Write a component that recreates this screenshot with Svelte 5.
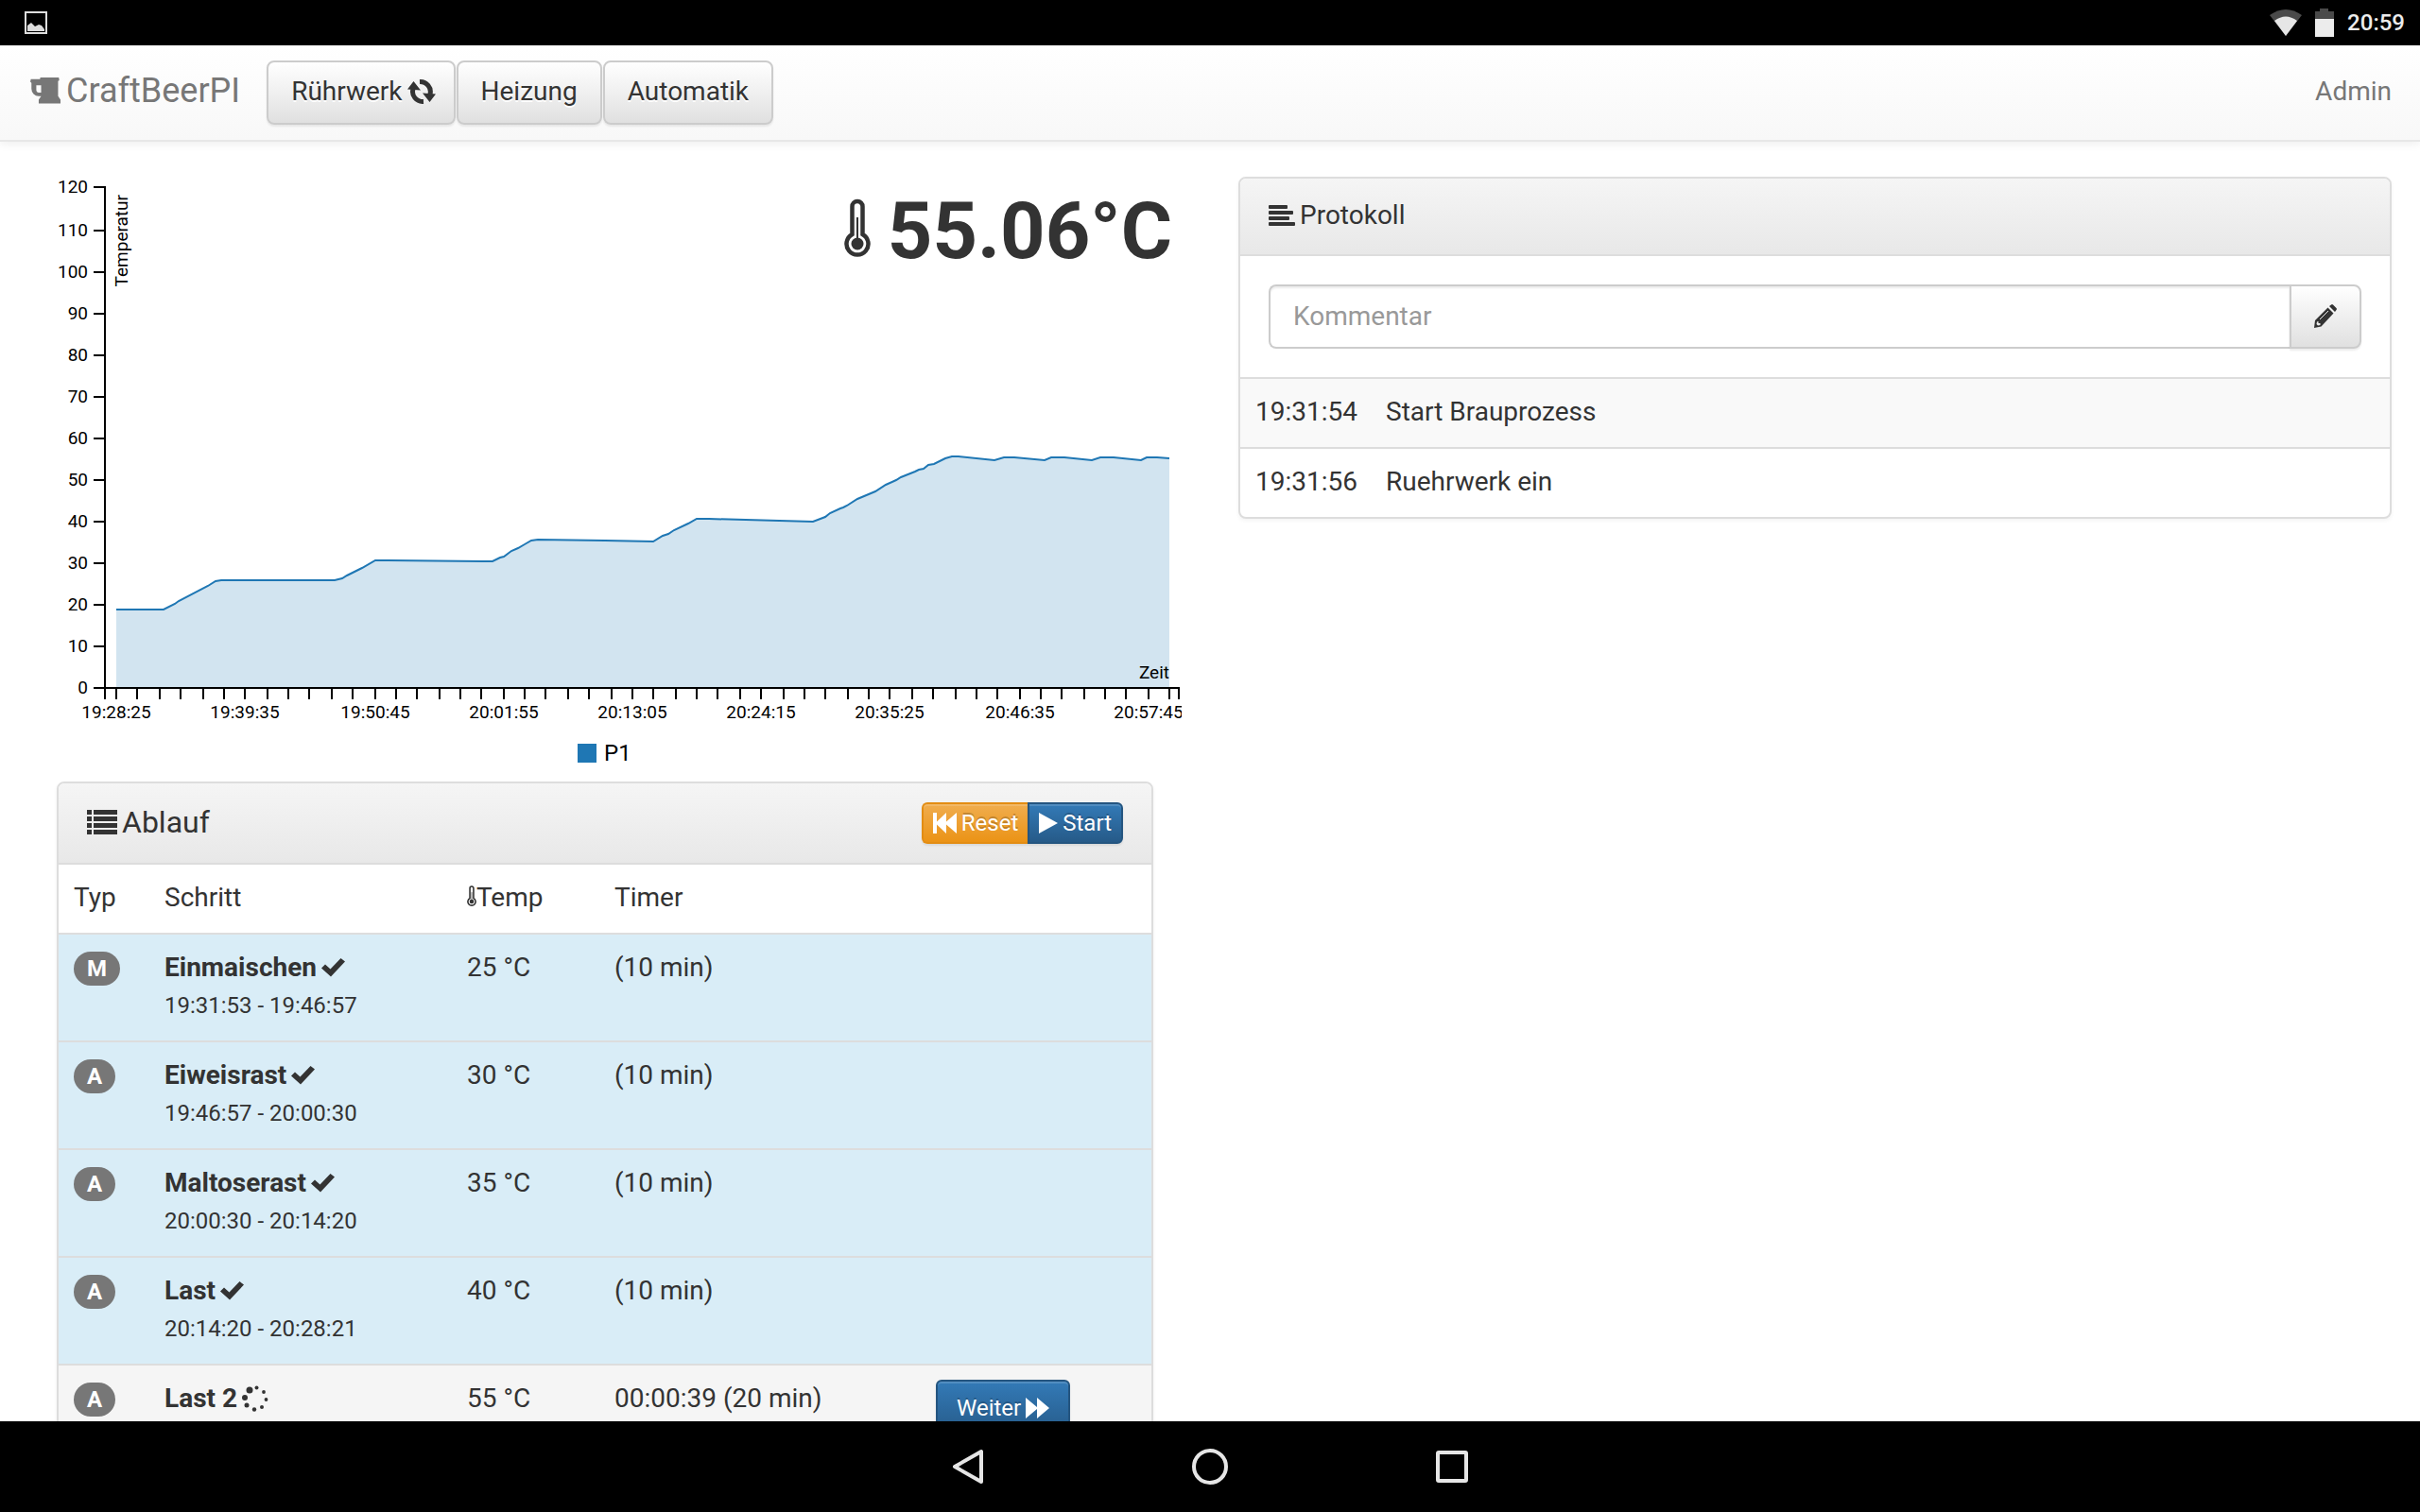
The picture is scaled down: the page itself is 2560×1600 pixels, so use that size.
<script>
    let comment = '';

    const controls = ['Rührwerk', 'Heizung', 'Automatik'];

    const steps = [
        { type: 'M', name: 'Einmaischen', from: '19:31:53', to: '19:46:57', temp: 25, timer: '(10 min)', state: 'done' },
        { type: 'A', name: 'Eiweisrast', from: '19:46:57', to: '20:00:30', temp: 30, timer: '(10 min)', state: 'done' },
        { type: 'A', name: 'Maltoserast', from: '20:00:30', to: '20:14:20', temp: 35, timer: '(10 min)', state: 'done' },
        { type: 'A', name: 'Last', from: '20:14:20', to: '20:28:21', temp: 40, timer: '(10 min)', state: 'done' },
        { type: 'A', name: 'Last 2', temp: 55, timer: '00:00:39 (20 min)', state: 'active' }
    ];

    const logs = [
        { time: '19:31:54', text: 'Start Brauprozess' },
        { time: '19:31:56', text: 'Ruehrwerk ein' }
    ];

    // chart
    const plotHeight = 530;
    const plotWidth = 1136;
    const maxTemp = 120;

    const yTicks = Array.from({ length: 13 }, (_, i) => ({
        label: i * 10,
        y: 2 * Math.ceil((plotHeight / 2) * (1 - (i * 10) / maxTemp))
    }));

    // every sixth tick carries a label
    const times = ['19:28:25', '19:39:35', '19:50:45', '20:01:55', '20:13:05', '20:24:15', '20:35:25', '20:46:35', '20:57:45'];
    const xTicks = Array.from({ length: 50 }, (_, i) => ({
        label: i % 6 === 0 ? times[i / 6] : '',
        x: 2 * Math.ceil(5.6 + 11.37 * i)
    }));

    const points = [
        [12, 447], [62, 447], [74, 441], [78, 438], [109, 422], [117, 417], [123, 416], [243, 416],
        [251, 414], [256, 411], [272, 403], [286, 395], [300, 395], [410, 396], [418, 392], [422, 391],
        [430, 385], [437, 382], [444, 378], [451, 374], [458, 373], [529, 374], [580, 375], [590, 369],
        [596, 367], [602, 363], [617, 356], [626, 351], [639, 351], [749, 354], [762, 349], [767, 345],
        [778, 340], [781, 339], [785, 337], [796, 330], [815, 322], [826, 315], [837, 310], [842, 307],
        [857, 301], [861, 299], [866, 298], [871, 294], [877, 293], [889, 287], [896, 285], [903, 285],
        [941, 289], [951, 286], [962, 286], [994, 289], [1001, 286], [1015, 286], [1044, 289], [1053, 286],
        [1067, 286], [1096, 289], [1102, 286], [1113, 286], [1126, 287]
    ];
    const line = 'M' + points.map((p) => p.join(' ')).join('L');
    const area = line + `L1126 ${plotHeight}L12 ${plotHeight}Z`;
</script>

{#snippet thermometer()}
    <svg class="thermo" viewBox="0 0 28 62" aria-hidden="true">
        <path d="M8.5 38V8.500a5.500 5.500 0 0 1 11 0V38a11.500 11.500 0 1 1-11 0z" fill="none" stroke="currentColor" stroke-width="4.500" />
        <circle cx="14" cy="48" r="6.500" fill="currentColor" />
        <path d="M14 20v24" stroke="currentColor" stroke-width="2" />
    </svg>
{/snippet}

<div class="screen">
    <header class="status">
        <svg class="shot" viewBox="0 0 24 24" aria-hidden="true">
            <rect x="1" y="1" width="22" height="22" fill="none" stroke="#ddd" stroke-width="2" />
            <path d="M3 21v-6l4-3 4 4 4-2 3 1 3 4v2z" fill="#ddd" />
        </svg>
        <div class="status-right">
            <svg class="wifi" viewBox="0 0 34 28" aria-hidden="true">
                <path d="M0 6Q17-6 34 6L17 28z" fill="#4a4a4a" />
                <path d="M5 12Q17 3 29 12L17 28z" fill="#e6e6e6" />
            </svg>
            <svg class="battery" viewBox="0 0 20 30" aria-hidden="true">
                <path d="M0 3h5V0h9v3h6v9H0z" fill="#4a4a4a" />
                <path d="M0 11h20v19H0z" fill="#ececec" />
            </svg>
            <span class="clock">20:59</span>
        </div>
    </header>

    <nav class="navbar">
        <a class="brand" href="#top">
            <svg class="beer" viewBox="64 128 1600 1344" aria-hidden="true">
                <path fill="currentColor" d="M640 896v-384h-256v256q0 53 37.500 90.500t90.500 37.500h128zm1024 384v192h-1152v-192l128-192h-128q-159 0-271.500-112.500t-112.500-271.500v-320l-64-64 32-128h480l32-128h960l32 192-64 32v800z" />
            </svg>
            CraftBeerPI
        </a>
        <div class="controls">
            {#each controls as name, i}
                <button type="button" class="btn btn-default">
                    {name}
                    {#if i === 0}
                        <svg class="refresh" viewBox="0 0 30 26" aria-hidden="true">
                            <path d="M13 2.500a11 10.500 0 0 1 11 13M17 23.500A11 10.500 0 0 1 6 10" fill="none" stroke="currentColor" stroke-width="5" />
                            <path d="M16 14.500l14 1-6.500 8.500zM0 10.500L6.500 2l7.500 9.500z" fill="currentColor" />
                        </svg>
                    {/if}
                </button>
            {/each}
        </div>
        <a class="admin" href="#admin">Admin</a>
    </nav>

    <main>
        <section class="left">
            <div class="chart">
                <svg viewBox="0 0 1190 640" role="img" aria-label="Temperatur">
                    <g transform="translate(51 11)">
                        <path d={area} fill="#1f77b4" opacity=".2" />
                        <path d={line} fill="none" stroke="#1f77b4" stroke-width="2" />
                        <path class="axis" d="M-12 0H0V{plotHeight}H-12" />
                        <path class="axis" d="M0 {plotHeight + 12}V{plotHeight}H{plotWidth}V{plotHeight + 12}" />
                        {#each yTicks as tick}
                            <path class="axis" d="M-12 {tick.y}H0" />
                            <text x="-18" y={tick.y + 6} text-anchor="end">{tick.label}</text>
                        {/each}
                        {#each xTicks as tick}
                            <path class="axis" d="M{tick.x} {plotHeight}v12" />
                            <text x={tick.x} y={plotHeight + 32} text-anchor="middle">{tick.label}</text>
                        {/each}
                        <text transform="rotate(-90)" x="-8" y="24" text-anchor="end">Temperatur</text>
                        <text x="1126" y="520" text-anchor="end">Zeit</text>
                    </g>
                    <rect x="551" y="600" width="20" height="20" fill="#1f77b4" />
                    <text class="legend" x="579" y="618">P1</text>
                </svg>
                <h1 class="reading">{@render thermometer()} 55.06°C</h1>
            </div>

            <div class="panel steps">
                <div class="panel-heading">
                    <h3>
                        <svg class="list" viewBox="0 0 32 26" aria-hidden="true">
                            <path d="M0 0h5v5H0zM7 0h25v5H7zM0 7h5v5H0zM7 7h25v5H7zM0 14h5v5H0zM7 14h25v5H7zM0 21h5v5H0zM7 21h25v5H7z" fill="currentColor" />
                        </svg>
                        Ablauf
                    </h3>
                    <div class="btn-group">
                        <button type="button" class="btn btn-xs btn-warning">
                            <svg class="fast" viewBox="0 0 25 22" aria-hidden="true">
                                <path d="M0 0h4v9.500L14 0v9.500L25 0v22L14 12.500V22L4 12.500V22H0z" fill="currentColor" />
                            </svg>
                            Reset
                        </button>
                        <button type="button" class="btn btn-xs btn-primary">
                            <svg class="play" viewBox="0 0 20 22" aria-hidden="true">
                                <path d="M0 0l20 11L0 22z" fill="currentColor" />
                            </svg>
                            Start
                        </button>
                    </div>
                </div>
                <table>
                    <colgroup>
                        <col class="col-type" />
                        <col class="col-step" />
                        <col class="col-temp" />
                        <col class="col-timer" />
                        <col />
                    </colgroup>
                    <thead>
                        <tr>
                            <th>Typ</th>
                            <th>Schritt</th>
                            <th>{@render thermometer()}Temp</th>
                            <th>Timer</th>
                            <th></th>
                        </tr>
                    </thead>
                    <tbody>
                        {#each steps as step}
                            <tr class={step.state}>
                                <td><span class="badge">{step.type}</span></td>
                                <td>
                                    <div class="name">
                                        <b>{step.name}</b>
                                        {#if step.state === 'done'}
                                            <svg class="check" viewBox="0 0 25 20" aria-hidden="true">
                                                <path d="M0 10.500L4 6.500L9.500 11.500L20.500 0L25 3.500L10 19.500z" fill="currentColor" />
                                            </svg>
                                        {:else}
                                            <svg class="spinner" viewBox="0 0 28 28" aria-hidden="true">
                                                <g fill="currentColor">
                                                    <circle cx="8" cy="5" r="3.500" />
                                                    <circle cx="3" cy="13" r="3" />
                                                    <circle cx="5" cy="21" r="2.500" />
                                                    <circle cx="13" cy="25.500" r="2.200" />
                                                    <circle cx="21" cy="23" r="2" />
                                                    <circle cx="25.500" cy="15" r="1.900" />
                                                    <circle cx="23" cy="7" r="1.900" />
                                                    <circle cx="15.500" cy="2.500" r="2" />
                                                </g>
                                            </svg>
                                        {/if}
                                    </div>
                                    {#if step.from}
                                        <small>{step.from} - {step.to}</small>
                                    {/if}
                                </td>
                                <td>{step.temp} °C</td>
                                <td>{step.timer}</td>
                                <td>
                                    {#if step.state === 'active'}
                                        <button type="button" class="btn btn-sm btn-primary">
                                            Weiter
                                            <svg class="fast" viewBox="0 0 25 22" aria-hidden="true">
                                                <path d="M0 0l12 10V0l13 11-13 11V12L0 22z" fill="currentColor" />
                                            </svg>
                                        </button>
                                    {/if}
                                </td>
                            </tr>
                        {/each}
                    </tbody>
                </table>
            </div>
        </section>

        <section class="right">
            <div class="panel">
                <div class="panel-heading">
                    <h4>
                        <svg class="align" viewBox="0 0 28 23" aria-hidden="true">
                            <g fill="currentColor">
                                <rect width="20" height="4" rx="1" />
                                <rect y="6" width="26" height="4" rx="1" />
                                <rect y="12" width="22" height="4" rx="1" />
                                <rect y="18" width="28" height="4" rx="1" />
                            </g>
                        </svg>
                        Protokoll
                    </h4>
                </div>
                <form class="comment" on:submit|preventDefault>
                    <input type="text" placeholder="Kommentar" aria-label="Kommentar" bind:value={comment} />
                    <button type="submit" class="btn btn-default" aria-label="Speichern">
                        <svg class="pencil" viewBox="0 0 24 25" aria-hidden="true">
                            <path d="M16 2l2-1.500q1-.8 2 0l3.500 3.500q.8 1 0 2L22 8zM14.500 3.500l6 6L7.500 23.500 0 25l1-8zM3 18.500L2.500 21 4 22.500l2.500-.5v-2H4.500v-2z" fill="currentColor" fill-rule="evenodd" />
                            <path d="M6 16L15 7" stroke="#eee" stroke-width="1" />
                        </svg>
                    </button>
                </form>
                <table class="log">
                    <tbody>
                        {#each logs as entry}
                            <tr>
                                <td class="time">{entry.time}</td>
                                <td>{entry.text}</td>
                            </tr>
                        {/each}
                    </tbody>
                </table>
            </div>
        </section>
    </main>

    <footer class="softkeys">
        <button type="button" aria-label="Zurück">
            <svg viewBox="0 0 40 40"><path d="M34 4v32L6 20z" /></svg>
        </button>
        <button type="button" aria-label="Home">
            <svg viewBox="0 0 40 40"><circle cx="20" cy="20" r="17" /></svg>
        </button>
        <button type="button" aria-label="Übersicht">
            <svg viewBox="0 0 40 40"><rect x="5" y="5" width="30" height="30" rx="1" /></svg>
        </button>
    </footer>
</div>

<style>
    :global(body) {
        margin: 0;
        background: #fff;
    }
    .screen {
        display: flex;
        flex-direction: column;
        height: 100vh;
        overflow: hidden;
        font-family: Roboto, sans-serif;
        font-size: 28px;
        line-height: 40px;
        color: #333;
    }
    svg {
        display: block;
        flex: none;
    }

    /* android status bar */
    .status {
        display: flex;
        justify-content: space-between;
        align-items: center;
        flex: none;
        height: 48px;
        padding: 0 16px 0 26px;
        background: #000;
    }
    .status-right {
        display: flex;
        align-items: center;
        gap: 14px;
    }
    .shot {
        width: 24px;
        height: 24px;
    }
    .wifi {
        width: 34px;
        height: 28px;
    }
    .battery {
        width: 20px;
        height: 30px;
    }
    .clock {
        font-size: 24px;
        font-weight: 500;
        color: #ececec;
    }

    /* navbar */
    .navbar {
        position: relative;
        display: flex;
        align-items: center;
        flex: none;
        height: 100px;
        padding: 0 30px;
        border-bottom: 2px solid #e7e7e7;
        background: linear-gradient(#fff, #f8f8f8);
        box-shadow: 0 2px 10px rgba(0, 0, 0, .075);
    }
    .brand {
        display: flex;
        align-items: center;
        gap: 6px;
        margin-right: 28px;
        padding: 0 0 4px 2px;
        font-size: 36px;
        color: #777;
        text-decoration: none;
    }
    .beer {
        width: 32px;
        height: 28px;
    }
    .controls {
        display: flex;
        flex: 1;
        gap: 1px;
    }
    .admin {
        padding-bottom: 2px;
        color: #777;
        text-decoration: none;
    }

    /* buttons */
    .btn {
        display: inline-flex;
        align-items: center;
        justify-content: center;
        gap: 5px;
        box-sizing: border-box;
        height: 68px;
        margin: 0;
        padding: 0 24px 2px;
        border: 2px solid #ccc;
        border-radius: 8px;
        font: inherit;
        white-space: nowrap;
        box-shadow: inset 0 2px 0 rgba(255, 255, 255, .15), 0 2px 2px rgba(0, 0, 0, .075);
    }
    .btn-default {
        color: #333;
        background: linear-gradient(#fff, #e0e0e0);
        text-shadow: 0 2px 0 #fff;
    }
    .btn-primary {
        color: #fff;
        border-color: #245580;
        background: linear-gradient(#337ab7, #265a88);
        text-shadow: 0 -2px 0 rgba(0, 0, 0, .2);
    }
    .btn-warning {
        color: #fff;
        border-color: #e38d13;
        background: linear-gradient(#f0ad4e, #eb9316);
        text-shadow: 0 -2px 0 rgba(0, 0, 0, .2);
    }
    .btn-sm {
        height: 60px;
        padding: 0 20px;
        border-radius: 6px;
        font-size: 24px;
    }
    .btn-xs {
        height: 44px;
        padding: 0 10px;
        border-radius: 6px;
        font-size: 24px;
    }
    .btn-group {
        display: flex;
    }
    .btn-group .btn:first-child {
        border-right: 0;
        border-radius: 6px 0 0 6px;
    }
    .btn-group .btn:last-child {
        border-radius: 0 6px 6px 0;
    }
    .refresh {
        width: 30px;
        height: 26px;
        margin-right: -5px;
    }
    .fast {
        width: 25px;
        height: 22px;
    }
    .play {
        width: 20px;
        height: 22px;
    }

    /* content */
    main {
        display: grid;
        grid-template-columns: 1fr 1fr;
        flex: 1;
        min-height: 0;
        padding-top: 37px;
        overflow: hidden;
    }
    .left {
        padding: 0 30px 0 60px;
    }
    .right {
        padding: 0 30px;
    }
    .chart {
        position: relative;
    }
    .chart > svg {
        width: 100%;
    }
    .chart text {
        font-size: 19px;
        fill: #000;
    }
    .chart .legend {
        font-size: 24px;
    }
    .axis {
        fill: none;
        stroke: #000;
        stroke-width: 2px;
    }
    .reading {
        position: absolute;
        top: 10px;
        right: 10px;
        display: flex;
        align-items: center;
        gap: 18px;
        margin: 0;
        font-size: 83px;
        line-height: 96px;
        font-weight: 700;
    }
    .reading .thermo {
        width: 28px;
        height: 62px;
        margin-bottom: 8px;
    }

    /* panels */
    .panel {
        border: 2px solid #ddd;
        border-radius: 8px;
        background: #fff;
        box-shadow: 0 2px 4px rgba(0, 0, 0, .05);
        overflow: hidden;
    }
    .steps {
        margin-right: 30px;
    }
    .panel-heading {
        display: flex;
        align-items: center;
        justify-content: space-between;
        padding: 20px 30px;
        border-bottom: 2px solid #ddd;
        background: linear-gradient(#f5f5f5, #e8e8e8);
    }
    h3,
    h4 {
        display: flex;
        align-items: center;
        gap: 5px;
        margin: 0;
        padding-bottom: 2px;
        font-size: 28px;
        font-weight: 400;
        line-height: 38px;
    }
    h3 {
        font-size: 32px;
    }
    .list {
        width: 32px;
        height: 26px;
    }
    .align {
        width: 28px;
        height: 23px;
    }
    table {
        width: 100%;
        border-collapse: collapse;
        table-layout: fixed;
    }
    .col-type {
        width: 96px;
    }
    .col-step {
        width: 320px;
    }
    .col-temp {
        width: 156px;
    }
    .col-timer {
        width: 340px;
    }
    th,
    td {
        padding: 15px 16px 17px;
        font-weight: 400;
        text-align: left;
        vertical-align: top;
    }
    tbody tr {
        border-top: 2px solid #ddd;
    }
    th .thermo {
        display: inline-block;
        width: 10px;
        height: 22px;
    }
    .done {
        background: #d9edf7;
    }
    .active {
        background: #f5f5f5;
    }
    .name {
        display: flex;
        align-items: center;
        gap: 5px;
    }
    small {
        display: block;
        font-size: 24px;
    }
    .badge {
        display: inline-block;
        padding: 6px 14px;
        border-radius: 20px;
        background: #777;
        color: #fff;
        font-size: 24px;
        font-weight: 700;
        line-height: 24px;
    }
    .check {
        width: 25px;
        height: 20px;
    }
    .spinner {
        width: 28px;
        height: 28px;
    }

    /* protocol */
    .comment {
        display: flex;
        padding: 30px;
    }
    .comment input {
        flex: 1;
        box-sizing: border-box;
        min-width: 0;
        height: 68px;
        padding: 0 24px 2px;
        border: 2px solid #ccc;
        border-right: 0;
        border-radius: 8px 0 0 8px;
        font: inherit;
        color: #555;
        box-shadow: inset 0 2px 2px rgba(0, 0, 0, .075);
    }
    .comment input::placeholder {
        color: #999;
        opacity: 1;
    }
    .comment .btn {
        border-radius: 0 8px 8px 0;
    }
    .pencil {
        width: 24px;
        height: 25px;
    }
    .log .time {
        width: 106px;
    }
    .log tr:nth-child(odd) {
        background: #f9f9f9;
    }

    /* android soft keys */
    .softkeys {
        display: flex;
        align-items: center;
        justify-content: center;
        gap: 216px;
        flex: none;
        height: 96px;
        background: #000;
    }
    .softkeys button {
        padding: 0;
        border: 0;
        background: none;
    }
    .softkeys svg {
        width: 40px;
        height: 40px;
        fill: none;
        stroke: #e6e6e6;
        stroke-width: 4;
        stroke-linejoin: round;
    }
</style>
